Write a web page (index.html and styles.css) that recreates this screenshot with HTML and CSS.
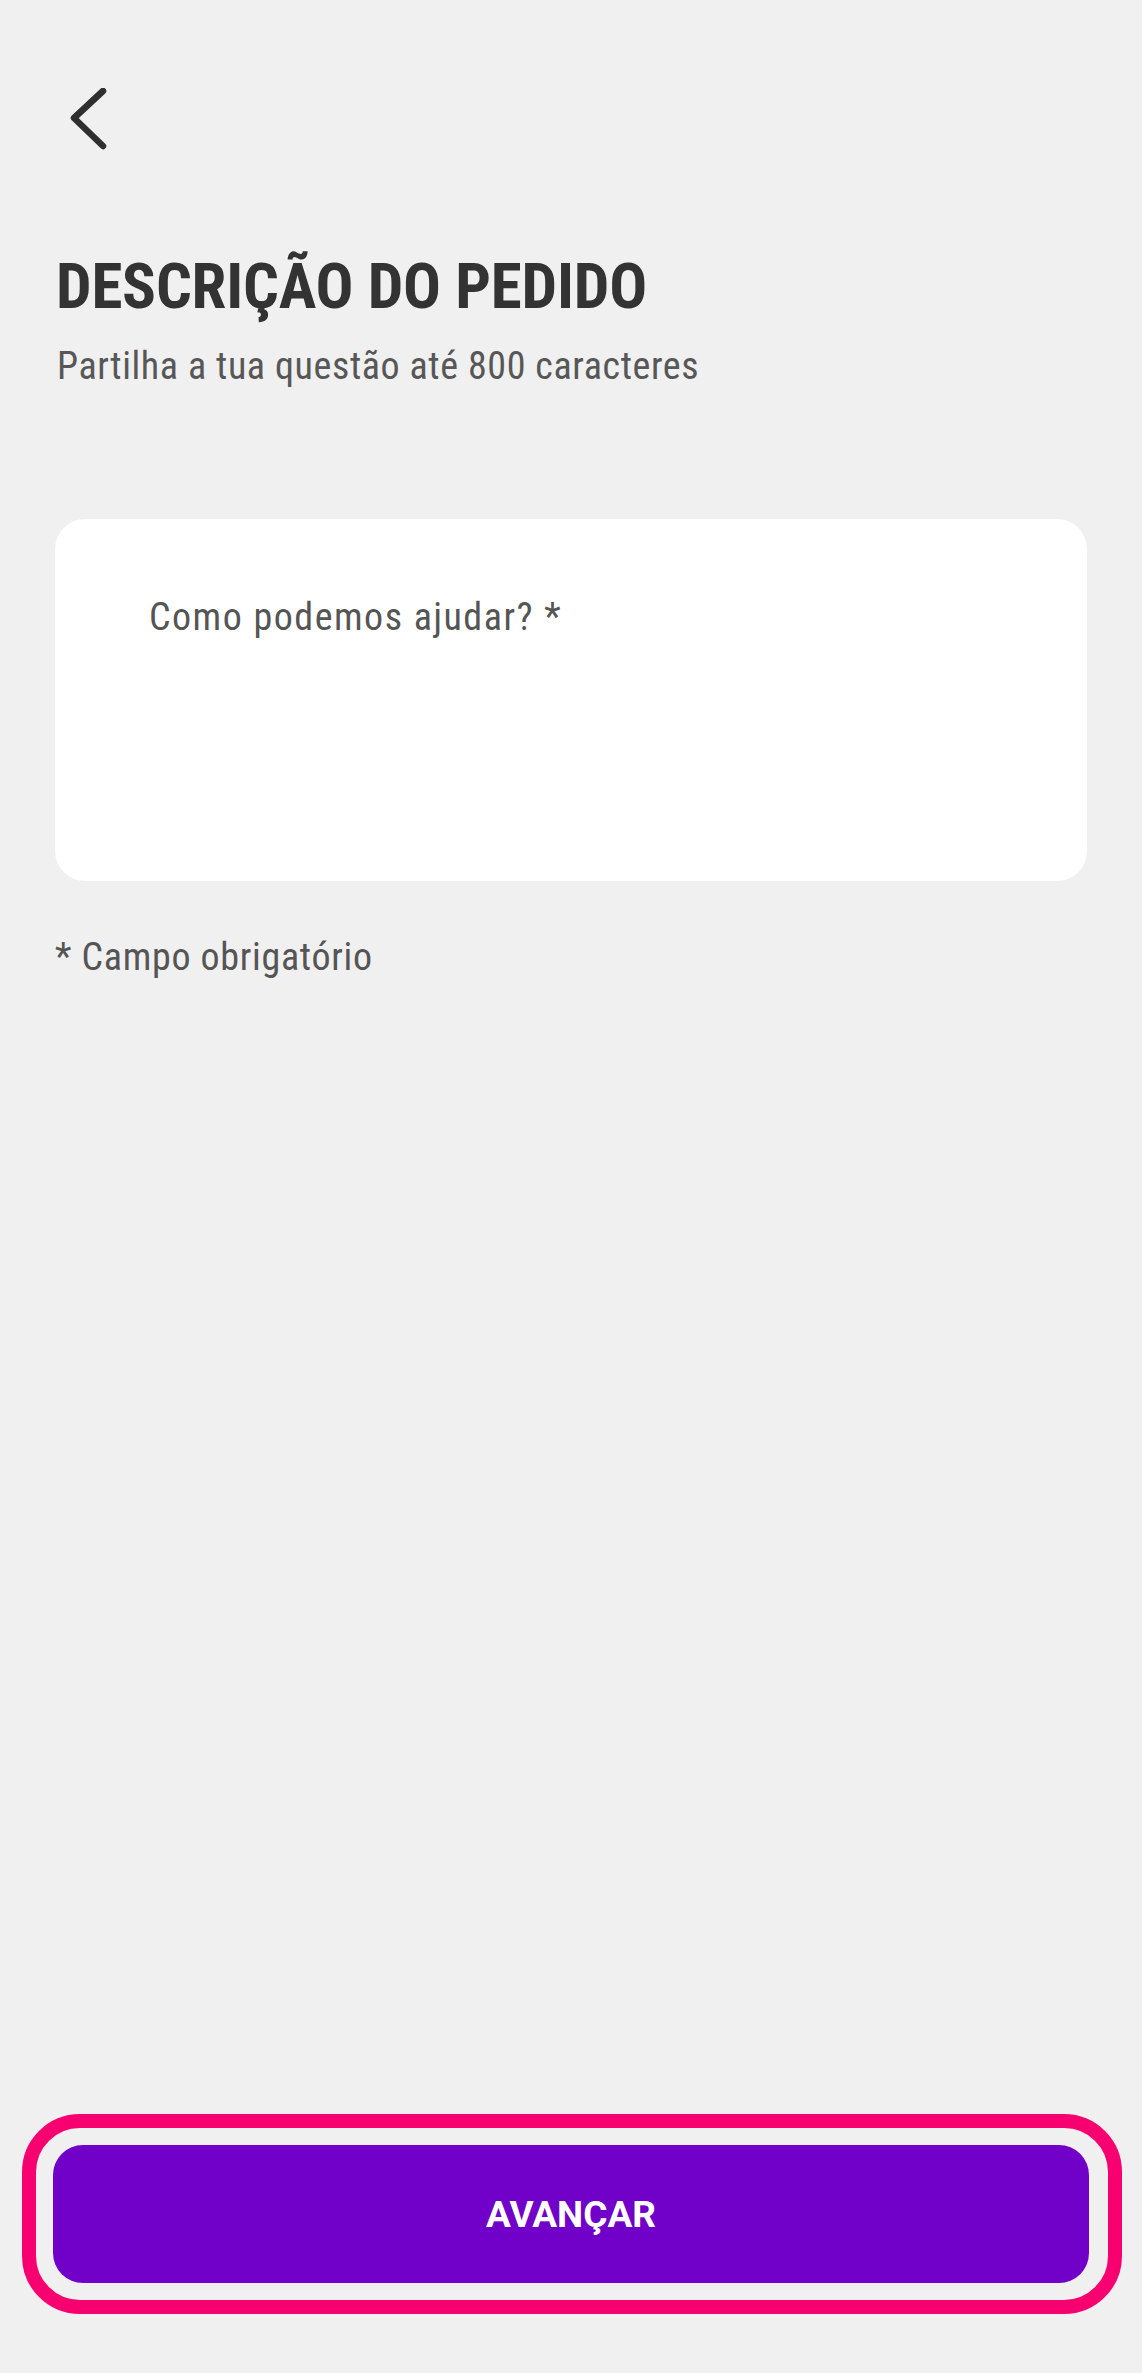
FILE: index.html
```html
<!DOCTYPE html>
<html lang="pt">
<head>
<meta charset="utf-8">
<title>Descrição do pedido</title>
<link rel="stylesheet" href="styles.css">
</head>
<body>
<div class="screen">
  <header class="topbar">
    <button class="back" aria-label="Voltar">
      <svg width="40" height="64" viewBox="0 0 40 64"><path d="M33 3 L4 30 L33 58" fill="none" stroke="#2f2f2f" stroke-width="6.5" stroke-linecap="round" stroke-linejoin="round"/></svg>
    </button>
  </header>
  <h1 class="title">DESCRIÇÃO DO PEDIDO</h1>
  <p class="subtitle">Partilha a tua questão até 800 caracteres</p>
  <div class="card">
    <label class="label">Como podemos ajudar? *</label>
  </div>
  <p class="note">* Campo obrigatório</p>

  <div class="footer">
    <div class="highlight">
      <button class="cta">AVANÇAR</button>
    </div>
  </div>
</div>
</body>
</html>
```
FILE: styles.css
```css
* { box-sizing: border-box; }
html, body { margin: 0; padding: 0; }
body {
  background: #f0f0f0;
  font-family: "Roboto Condensed", Roboto, "Liberation Sans", sans-serif;
}
.screen {
  min-height: 2373px;
  display: flex;
  flex-direction: column;
  padding: 0 55px;
}
.topbar { padding-top: 88px; height: 170px; }
.back {
  border: 0; background: none; padding: 0; margin-left: 15px;
  width: 40px; height: 64px; display: block;
}
.back svg { display: block; }
.title {
  margin: 85px 0 0 1px;
  font-size: 63px;
  font-weight: 700;
  letter-spacing: -0.2px;
  color: #333;
  line-height: 64px;
}
.subtitle {
  margin: 25px 0 0 2px;
  font-size: 38px;
  letter-spacing: 0.6px;
  color: #575757;
  line-height: 44px;
}
.card {
  margin-top: 131px;
  height: 362px;
  background: #fff;
  border-radius: 30px;
  padding: 76px 94px;
}
.label {
  font-size: 38px;
  letter-spacing: 1.5px;
  color: #555;
}
.note {
  margin: 54px 0 0;
  font-size: 38px;
  letter-spacing: 0.7px;
  color: #555;
}
.footer {
  margin-top: auto;
  padding-bottom: 59px;
  margin-left: -33px;
  margin-right: -35px;
}
.highlight {
  border: 14px solid #f7006f;
  border-radius: 58px;
  padding: 17px 19px 17px 17px;
}
.cta {
  display: block;
  width: 100%;
  height: 138px;
  border: 0;
  border-radius: 30px;
  background: #7100c8;
  color: #fff;
  font-family: Roboto, "Liberation Sans", sans-serif;
  font-size: 37px;
  font-weight: 700;
}
```
